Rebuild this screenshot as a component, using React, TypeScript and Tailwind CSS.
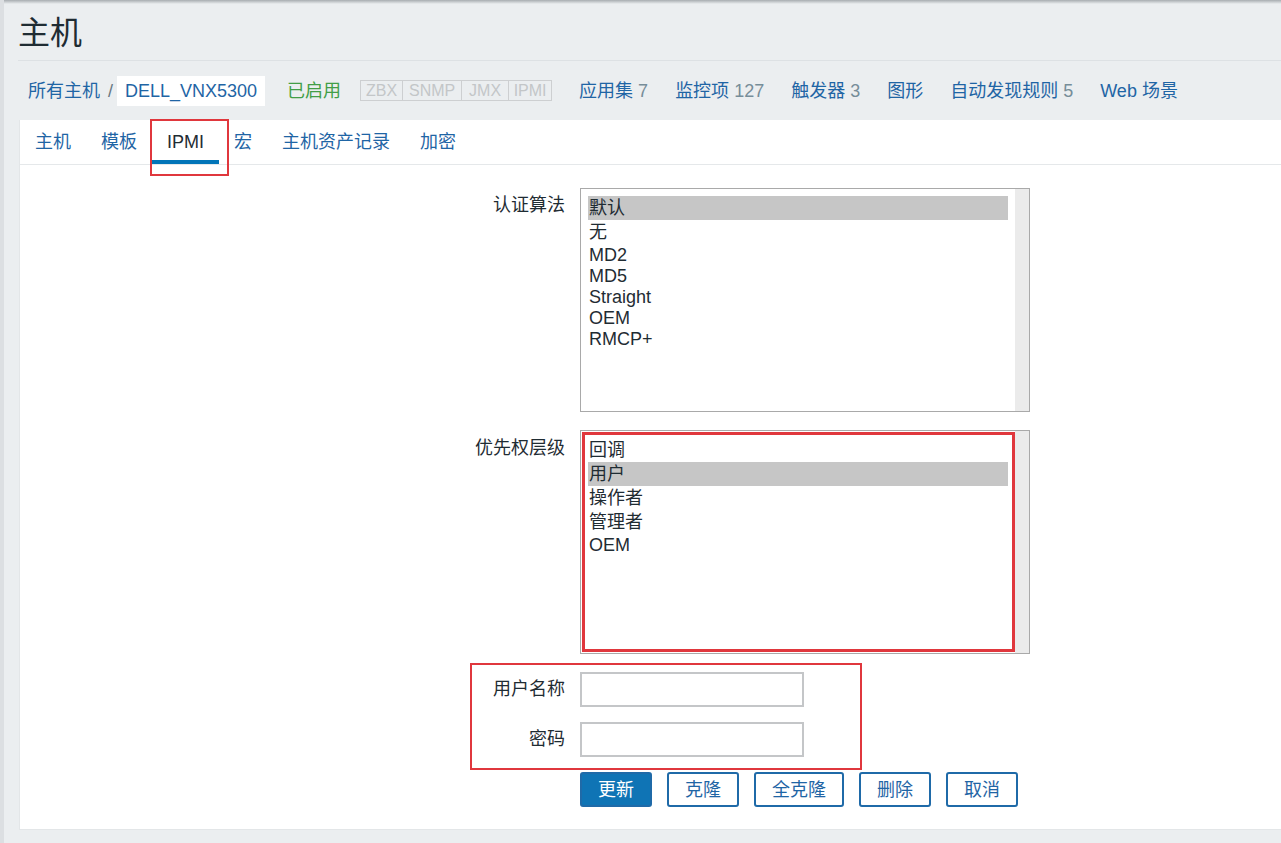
import React from 'react';

const font = "font-['Liberation_Sans','Noto_Sans_CJK_SC',sans-serif]";

type Item = { label: string; cjk?: boolean };

function ListBox({ items, selected }: { items: Item[]; selected: number }) {
  return (
    <div className="w-[450px] h-[224px] border border-[#a9a9a9] flex bg-white">
      <div className="flex-1 pt-[7px] px-[7px]">
        {items.map((it, i) => (
          <div
            key={it.label}
            className={`flex items-center pl-[1px] text-[18px] leading-none text-[#1f2c33] ${
              it.cjk ? 'h-[24px]' : 'h-[21px]'
            } ${i === selected ? 'bg-[#c6c6c6]' : ''}`}
          >
            {it.label}
          </div>
        ))}
      </div>
      <div className="w-[14px] bg-[#ebebeb]" />
    </div>
  );
}

function Btn({ children, primary }: { children: React.ReactNode; primary?: boolean }) {
  return (
    <button
      className={`h-[35px] px-[16px] rounded-[3px] border-2 border-[#1f6aa8] text-[18px] leading-none ${
        primary ? 'bg-[#0f74b5] text-white' : 'bg-white text-[#1f65a5]'
      }`}
    >
      {children}
    </button>
  );
}

export default function App() {
  const tabs = ['主机', '模板', 'IPMI', '宏', '主机资产记录', '加密'];
  const nav: [string, string?][] = [
    ['应用集', '7'],
    ['监控项', '127'],
    ['触发器', '3'],
    ['图形'],
    ['自动发现规则', '5'],
    ['Web 场景'],
  ];

  return (
    <div className={`${font} relative w-full h-[843px] overflow-hidden bg-[#ebeef0] text-[#1f2c33]`}>
      {/* top shadow + left edge */}
      <div className="absolute top-0 left-0 right-0 h-[4px] bg-gradient-to-b from-[#a7acb0] to-transparent" />
      <div className="absolute top-0 bottom-0 left-0 w-[4px] bg-[#dcdfe2]" />

      <div className="pl-[18px]">
        {/* title */}
        <div className="h-[61px] pt-[6px] flex items-center border-b border-[#dde1e4]">
          <h1 className="text-[32px] leading-none font-normal">主机</h1>
        </div>

        {/* breadcrumb / nav */}
        <div className="h-[59px] flex items-center pl-[10px] text-[18px] leading-none">
          <span className="text-[#1f65a5]">所有主机</span>
          <span className="text-[#687882] ml-[8px] mr-[4px]">/</span>
          <span className="bg-white text-[#1f65a5] px-[8px] h-[30px] flex items-center">DELL_VNX5300</span>
          <span className="text-[#429e47] ml-[22px]">已启用</span>
          <div className="ml-[19px] flex h-[21px] border border-[#cdcfd1] text-[16px] text-[#c3c6c8]">
            <span className="w-[42px] flex items-center justify-center border-r border-[#cdcfd1]">ZBX</span>
            <span className="w-[59px] flex items-center justify-center border-r border-[#cdcfd1]">SNMP</span>
            <span className="w-[47px] flex items-center justify-center border-r border-[#cdcfd1]">JMX</span>
            <span className="w-[42px] flex items-center justify-center">IPMI</span>
          </div>
          <div className="ml-[27px] flex gap-[27px]">
            {nav.map(([a, n]) => (
              <span key={a} className="text-[#1f65a5]">
                {a}
                {n && <span className="text-[#768d99] ml-[5px]">{n}</span>}
              </span>
            ))}
          </div>
        </div>

        {/* panel */}
        <div className="ml-[1px] h-[710px] bg-white border-l border-b border-[#e3e6e8]">
          <div className="h-[45px] flex border-b border-[#e5e8ea] text-[18px]">
            {tabs.map((t, i) => (
              <div
                key={t}
                className={`relative h-[44px] flex items-center px-[15px] ${
                  i === 2 ? 'text-[#1f2c33]' : 'text-[#1f65a5]'
                }`}
              >
                {t}
                {i === 2 && <div className="absolute left-0 right-0 bottom-0 h-[4px] bg-[#0275b8]" />}
              </div>
            ))}
          </div>

          <div className="pt-[23px] grid grid-cols-[545px_1fr] gap-x-[15px] text-[18px]">
            <div className="text-right pt-[8px] leading-none">认证算法</div>
            <ListBox
              selected={0}
              items={[
                { label: '默认', cjk: true },
                { label: '无', cjk: true },
                { label: 'MD2' },
                { label: 'MD5' },
                { label: 'Straight' },
                { label: 'OEM' },
                { label: 'RMCP+' },
              ]}
            />

            <div className="text-right pt-[9px] leading-none mt-[18px]">优先权层级</div>
            <div className="mt-[18px]">
              <ListBox
                selected={1}
                items={[
                  { label: '回调', cjk: true },
                  { label: '用户', cjk: true },
                  { label: '操作者', cjk: true },
                  { label: '管理者', cjk: true },
                  { label: 'OEM' },
                ]}
              />
            </div>

            <div className="mt-[18px] h-[35px] flex items-center justify-end">用户名称</div>
            <div className="mt-[18px]">
              <input className="w-[224px] h-[35px] border-2 border-[#c4c6c8] bg-white outline-none" />
            </div>

            <div className="mt-[15px] h-[35px] flex items-center justify-end">密码</div>
            <div className="mt-[15px]">
              <input type="password" className="w-[224px] h-[35px] border-2 border-[#c4c6c8] bg-white outline-none" />
            </div>

            <div />
            <div className="mt-[15px] flex gap-[15px]">
              <Btn primary>更新</Btn>
              <Btn>克隆</Btn>
              <Btn>全克隆</Btn>
              <Btn>删除</Btn>
              <Btn>取消</Btn>
            </div>
          </div>
        </div>
      </div>

      {/* red annotation boxes */}
      <div className="absolute left-[150px] top-[119px] w-[79px] h-[57px] border-2 border-[#e0373d]" />
      <div className="absolute left-[582px] top-[432px] w-[433px] h-[220px] border-[3px] border-[#e0373d]" />
      <div className="absolute left-[470px] top-[663px] w-[392px] h-[107px] border-2 border-[#e0373d]" />
    </div>
  );
}
